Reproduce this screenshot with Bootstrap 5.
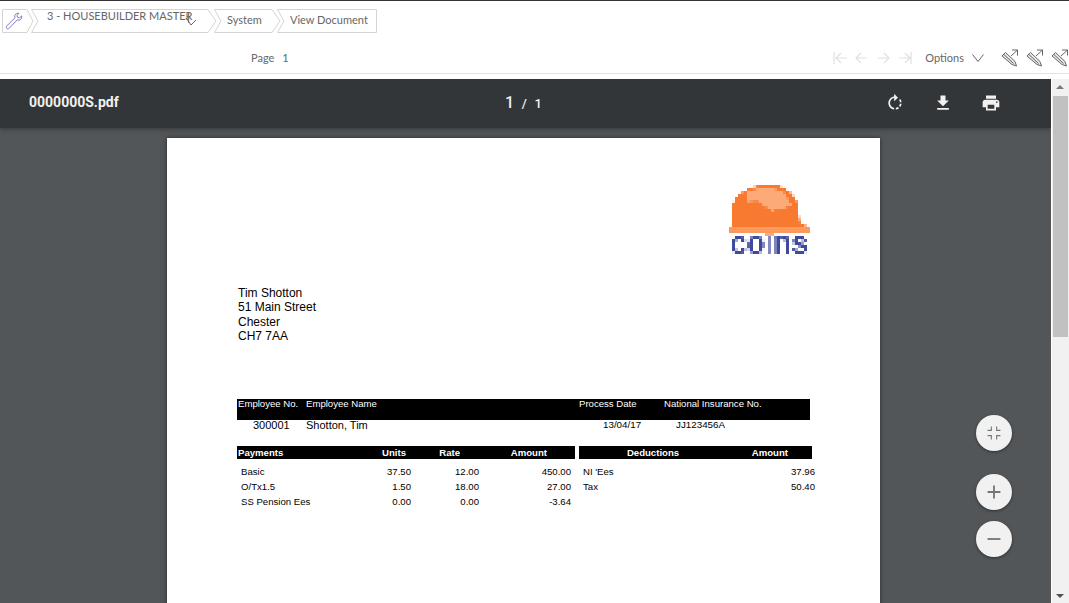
<!DOCTYPE html>
<html lang="en">
<head>
    <meta charset="UTF-8">
    <title>View Document</title>
    <link href="https://cdn.jsdelivr.net/npm/bootstrap@5.3.0/dist/css/bootstrap.min.css" rel="stylesheet">
    <style>
        html, body { height: 100%; overflow: hidden; }
        body { font-family: Lato, sans-serif; font-size: 11px; color: #666; border-top: 1px solid #333; background: #fff; }
        .crumbs { position: relative; width: 377px; height: 24px; margin: 8px 0 0 2px; }
        .crumbs svg.crumb-bg { position: absolute; left: 0; top: 0; }
        .crumb-text { position: absolute; top: 0; line-height: 21px; white-space: nowrap; }
        .crumb-first { left: 45px; top: -4px; }
        .crumb-system { left: 225px; }
        .crumb-view { left: 288px; }
        .wrench { position: absolute; left: 3px; top: 3px; }
        .turn { position: absolute; left: 182px; top: 3px; }
        .toolrow { height: 41px; padding: 10px 0 0 251px; border-bottom: 1px solid #e4e4e4; }
        .toolicons { flex-shrink: 0; padding-right: 1px; }
        .toolicons svg { flex-shrink: 0; }
        .nav-ic { margin-right: 12px; }
        .opt-chevron { margin: 0 17px 0 8px; }
        .gap-white { height: 5px; }
        .viewer { height: 524px; }
        .viewer-main { width: 1051px; background: #525659; position: relative; overflow: hidden; }
        .scroller { width: 17px; margin-left: 1px; background: #f1f1f1; position: relative; }
        .scroll-thumb { height: 241px; width: 15px; margin: 17px 0 0 1px; background: #c1c1c1; }
        .arrow-up, .arrow-down { position: absolute; left: 4px; border-left: 4px solid transparent; border-right: 4px solid transparent; }
        .arrow-up { top: 6px; border-bottom: 4px solid #7a7a7a; }
        .arrow-down { bottom: 5px; border-top: 4px solid #505050; }
        .pdf-bar { height: 49px; padding-bottom: 2px; background: #323639; color: #f1f1f1; box-shadow: 0 2px 4px rgba(0,0,0,.25); position: relative; font-family: Roboto, sans-serif; }
        .pdf-title { width: 505px; padding-left: 29px; font-size: 14px; font-weight: 700; }
        .pdf-count { width: 36px; font-size: 13px; font-weight: 500; white-space: nowrap; letter-spacing: .4px; }
        .pdf-count b { font-size: 16px; font-weight: 500; }
        .pdf-actions { margin-left: 344px; gap: 28px; }
        .sheet { width: 713px; height: 520px; margin: 10px 0 0 167px; background: #fff; color: #000; padding: 47px 0 0 70px; font-family: "Liberation Sans", Arial, sans-serif; box-shadow: 0 0 4px rgba(0,0,0,.5); }
        .logo-row { width: 573px; height: 84px; }
        .logo-word { font-family: "Liberation Sans", sans-serif; font-weight: 700; font-size: 34px; }
        .address { font-size: 12px; line-height: 14.4px; margin: 17px 0 0 1px; height: 113px; }
        .emp-grid { display: grid; grid-template-columns: 69px 273px 85px 1fr; width: 573px; }
        .emp-head { background: #000; color: #fff; height: 21px; font-size: 9.6px; line-height: 9px; }
        .emp-head span:first-child { padding-left: 1px; }
        .emp-vals { font-size: 11px; line-height: 12px; height: 27px; margin-top: -1px; align-items: start; }
        .emp-vals .c1 { padding-left: 16px; }
        .emp-vals .c3 { padding-left: 24px; font-size: 9.8px; }
        .emp-vals .c4 { padding-left: 12px; font-size: 9.8px; }
        .pay-heads { gap: 4px; height: 13px; font-size: 9.6px; font-weight: 700; line-height: 13px; color: #fff; }
        .pay-left, .pay-right { background: #000; display: grid; }
        .pay-left { width: 338px; grid-template-columns: 100px 69px 54px 87px; }
        .pay-left span:first-child { padding-left: 1px; }
        .pay-right { width: 233px; grid-template-columns: 148px 61px; text-align: center; }
        .pay-rows { margin-top: 5px; font-size: 9.6px; line-height: 15px; }
        .pay-line { display: grid; grid-template-columns: 130px 44px 68px 92px 12px 208px 24px; width: 578px; }
        .pay-line span:first-child { padding-left: 4px; }
        .fab-zoom { position: absolute; left: 976px; width: 36px; height: 36px; border-radius: 50%; background: #f1f1f1; box-shadow: 0 1px 3px rgba(0,0,0,.45); }
        .fab-a { top: 336px; } .fab-b { top: 395px; } .fab-c { top: 442px; }
    </style>
</head>
<body>
<!-- fil d'ariane -->
<div class="crumbs">
    <svg class="crumb-bg" width="377" height="24" fill="#fff" stroke="#d4d4d4" stroke-width="1">
        <path d="M.5.5H25L31 12 25 23.5H.5Z"/>
        <path d="M29.500.5H206L214 12 206 23.5H29.500L36 12Z"/>
        <path d="M212.500.5H270L278 12 270 23.5H212.500L219 12Z"/>
        <path d="M275.500.5H374.500V23.500H275.500L282 12Z"/>
    </svg>
    <svg class="wrench" width="18" height="18" viewBox="0 0 20 20" fill="none" stroke="#8a72c8" stroke-width="1.1" stroke-linejoin="round"><path d="M13 1.500 10.800 3.500 11 6.500 2 15.500C.9 16.800 1.400 18.100 2.300 18.500 3.300 19 4.300 18.600 5 17.800L13.500 8.800 16.500 9 18.500 6.800 18.600 4.300 16 6.500 13.800 5.800 13.400 3.600 15.500 1.400Z"/></svg>
    <span class="crumb-text crumb-first">3 - HOUSEBUILDER MASTER</span>
    <svg class="turn" width="14" height="14" viewBox="0 0 14 14" fill="none" stroke="#666"><path d="M4.700 1V11M2 6 7 13 12 8"/></svg>
    <span class="crumb-text crumb-system">System</span>
    <span class="crumb-text crumb-view">View Document</span>
</div>

<div class="toolrow d-flex align-items-center">
    <span class="me-2">Page</span><span>1</span>
    <div class="toolicons d-flex align-items-center ms-auto">
        <svg class="nav-ic" width="80" height="14" viewBox="0 0 80 14" fill="none" stroke="#e0e0e0" stroke-width="1.200">
            <path d="M1 1V13M14 7H3M8 2 3 7 8 12"/>
            <path d="M34 7H23M28 2 23 7 28 12"/>
            <path d="M45 7H56M51 2 56 7 51 12"/>
            <path d="M78 1V13M66 7H77M72 2 77 7 72 12"/>
        </svg>
        <span class="text-nowrap">Options</span>
        <svg class="opt-chevron" width="12" height="8" viewBox="0 0 12 8" fill="none" stroke="#666"><path d="M.5.500 6 7.500 11.500.500"/></svg>
        <svg width="17" height="18" viewBox="0 0 17 18" fill="none" stroke="#666"><path d="M1 7 4.500 3.500 14 12.500 15.500 17 11 15.500Z" fill="#e8e8e8"/><path d="M2.700 5.300 12.500 14.500M11 1H16.500V6.500M16.500 1 10 7"/></svg>
        <svg class="ms-2" width="17" height="18" viewBox="0 0 17 18" fill="none" stroke="#666"><path d="M1 7 4.500 3.500 14 12.500 15.500 17 11 15.500Z" fill="#e8e8e8"/><path d="M2.700 5.300 12.500 14.500M11 1H16.500V6.500M16.500 1 10 7"/></svg>
        <svg class="ms-2" width="17" height="18" viewBox="0 0 17 18" fill="none" stroke="#666"><path d="M1 7 4.500 3.500 14 12.500 15.500 17 11 15.500Z" fill="#e8e8e8"/><path d="M2.700 5.300 12.500 14.500M11 1H16.500V6.500M16.500 1 10 7"/></svg>
    </div>
</div>
<div class="gap-white"></div>

<div class="viewer d-flex">
    <div class="viewer-main">
        <div class="pdf-bar d-flex align-items-center">
            <div class="pdf-title">0000000S.pdf</div>
            <div class="pdf-count"><b>1</b> &nbsp;/&nbsp; 1</div>
            <div class="pdf-actions d-flex align-items-center">
                <svg width="20" height="20" viewBox="0 0 24 24" fill="#f1f1f1"><path d="M15.550 5.550L11 1v3.070C7.060 4.560 4 7.920 4 12s3.050 7.440 7 7.930v-2.020c-2.840-.48-5-2.940-5-5.910s2.160-5.430 5-5.910V10l4.550-4.450zM19.930 11c-.17-1.390-.72-2.730-1.620-3.890l-1.420 1.420c.54.75.88 1.600 1.020 2.470h2.020zM13 17.900v2.020c1.390-.17 2.740-.71 3.900-1.610l-1.440-1.440c-.75.54-1.590.89-2.460 1.030zm3.890-2.420l1.420 1.410c.9-1.160 1.450-2.500 1.620-3.890h-2.020c-.14.87-.48 1.720-1.020 2.480z"/></svg>
                <svg width="20" height="20" viewBox="0 0 24 24" fill="#f1f1f1"><path d="M19 9h-4V3H9v6H5l7 7 7-7zM5 18v2h14v-2H5z"/></svg>
                <svg width="20" height="20" viewBox="0 0 24 24" fill="#f1f1f1"><path d="M19 8H5c-1.660 0-3 1.340-3 3v6h4v4h12v-4h4v-6c0-1.660-1.340-3-3-3zm-3 11H8v-5h8v5zm3-7c-.55 0-1-.45-1-1s.45-1 1-1 1 .45 1 1-.45 1-1 1zm-1-9H6v4h12V3z"/></svg>
            </div>
        </div>

        <div class="sheet">
            <div class="logo-row d-flex justify-content-end">
                <svg width="81" height="84" viewBox="0 0 81 84">
                    <defs>
                        <filter id="chunky" filterUnits="userSpaceOnUse" x="0" y="0" width="81" height="84" color-interpolation-filters="sRGB">
                            <feFlood x="1" y="1" width="1" height="1"/>
                            <feComposite width="3" height="3"/>
                            <feTile result="grid"/>
                            <feComposite in="SourceGraphic" in2="grid" operator="in"/>
                            <feMorphology operator="dilate" radius="1"/>
                            <feGaussianBlur stdDeviation=".6"/>
                        </filter>
                    </defs>
                    <g filter="url(#chunky)">
                        <path d="M3 41V24C4 14 9 9 16 6 24 1 32 0 44 0 56 1 66 8 69 20L71 38 80 42V47H0V42Z" fill="#f87a30"/>
                        <path d="M18 17 18 7C30 2 44 2 55 7L63 21 43 26 28 16Z" fill="#fbaa78"/>
                        <path d="M0 42H80V47H0Z" fill="#fc9a5e"/>
                        <rect x="37" y="49" width="7" height="3" fill="#fbaa78"/>
                        <text class="logo-word" transform="translate(1 69) scale(.88 1)" fill="#3f4a9c">co<tspan fill="#8389c4">ı</tspan>ns</text>
                    </g>
                </svg>
            </div>
            <div class="address">Tim Shotton<br>51 Main Street<br>Chester<br>CH7 7AA</div>

            <div class="emp-grid emp-head">
                <span>Employee No.</span><span>Employee Name</span><span>Process Date</span><span>National Insurance No.</span>
            </div>
            <div class="emp-grid emp-vals">
                <span class="c1">300001</span><span>Shotton, Tim</span><span class="c3">13/04/17</span><span class="c4">JJ123456A</span>
            </div>

            <div class="pay-heads d-flex">
                <div class="pay-left"><span>Payments</span><span class="text-end">Units</span><span class="text-end">Rate</span><span class="text-end">Amount</span></div>
                <div class="pay-right"><span>Deductions</span><span class="text-end">Amount</span></div>
            </div>
            <div class="pay-rows">
                <div class="pay-line"><span>Basic</span><span class="text-end">37.50</span><span class="text-end">12.00</span><span class="text-end">450.00</span><span></span><span>NI 'Ees</span><span class="text-end">37.96</span></div>
                <div class="pay-line"><span>O/Tx1.5</span><span class="text-end">1.50</span><span class="text-end">18.00</span><span class="text-end">27.00</span><span></span><span>Tax</span><span class="text-end">50.40</span></div>
                <div class="pay-line"><span>SS Pension Ees</span><span class="text-end">0.00</span><span class="text-end">0.00</span><span class="text-end">-3.64</span></div>
            </div>
        </div>

        <div class="fab-zoom fab-a d-flex align-items-center justify-content-center">
            <svg width="22" height="22" viewBox="0 0 24 24" fill="#757575"><path d="M5 15.500h3.500V19h1.200v-4.700H5v1.200zM8.500 8.500H5v1.200h4.700V5H8.500v3.500zM14.300 19h1.200v-3.500H19v-1.200h-4.700V19zM15.500 8.500V5h-1.200v4.700H19V8.500h-3.500z"/></svg>
        </div>
        <div class="fab-zoom fab-b d-flex align-items-center justify-content-center">
            <svg width="22" height="22" viewBox="0 0 24 24" fill="#757575"><path d="M19 13h-6v6h-2v-6H5v-2h6V5h2v6h6v2z"/></svg>
        </div>
        <div class="fab-zoom fab-c d-flex align-items-center justify-content-center">
            <svg width="22" height="22" viewBox="0 0 24 24" fill="#757575"><path d="M19 13H5v-2h14v2z"/></svg>
        </div>
    </div>
    <div class="scroller">
        <div class="arrow-up"></div>
        <div class="scroll-thumb"></div>
        <div class="arrow-down"></div>
    </div>
</div>

<script src="https://cdn.jsdelivr.net/npm/bootstrap@5.3.0/dist/js/bootstrap.bundle.min.js"></script>
</body>
</html>
